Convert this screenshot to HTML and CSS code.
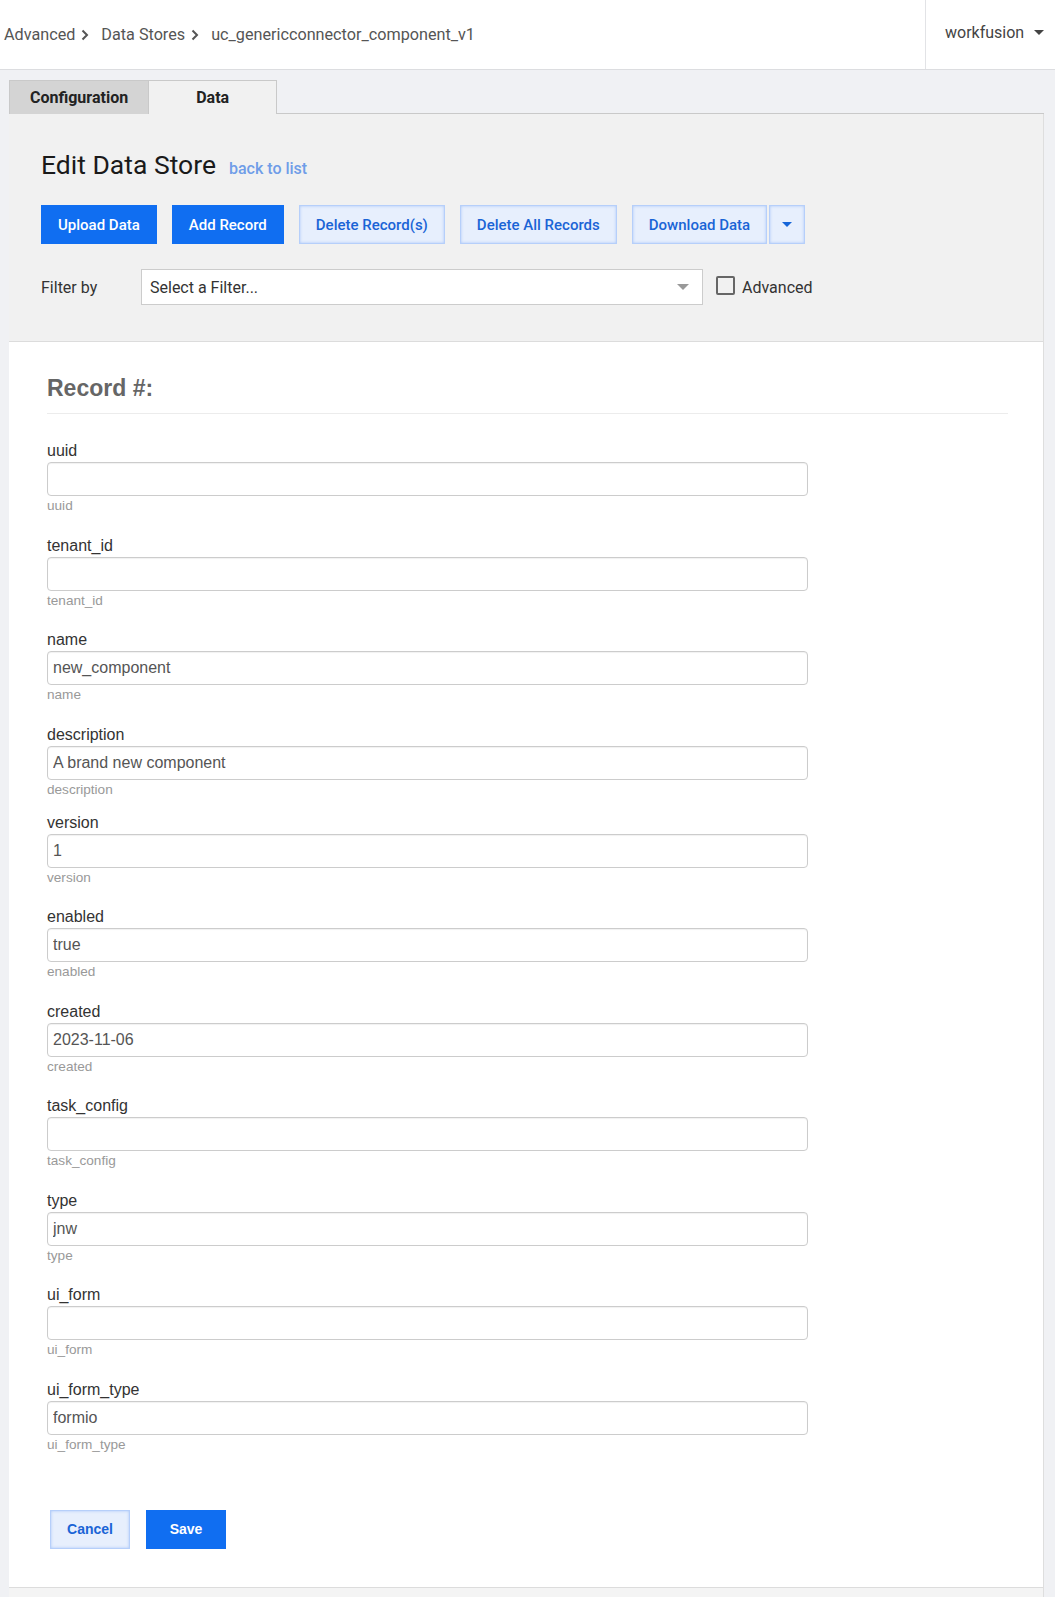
FILE: index.html
```html
<!DOCTYPE html>
<html lang="en">
<head>
    <meta charset="UTF-8">
    <title>Edit Data Store</title>
    <link rel="stylesheet" href="styles.css">
</head>
<body>
    <header class="topbar">
        <nav class="crumbs">
            <a href="#">Advanced</a>
            <svg class="chev" width="8" height="12" viewBox="0 0 8 12"><path d="M1.5 1.5 6 6l-4.5 4.5" fill="none" stroke="#555" stroke-width="2"/></svg>
            <a href="#">Data Stores</a>
            <svg class="chev" width="8" height="12" viewBox="0 0 8 12"><path d="M1.5 1.5 6 6l-4.5 4.5" fill="none" stroke="#555" stroke-width="2"/></svg>
            <span>uc_genericconnector_component_v1</span>
        </nav>
        <div class="user">workfusion <span class="caret"></span></div>
    </header>

    <main class="page">
        <div class="tabs">
            <a class="tab" href="#">Configuration</a>
            <a class="tab active" href="#">Data</a>
        </div>

        <section class="panel">
            <div class="panel-head">
                <div class="title-row">
                    <h1>Edit Data Store</h1>
                    <a class="back" href="#">back to list</a>
                </div>
                <div class="actions">
                    <button class="btn primary">Upload Data</button>
                    <button class="btn primary">Add Record</button>
                    <button class="btn light">Delete Record(s)</button>
                    <button class="btn light">Delete All Records</button>
                    <div class="split">
                        <button class="btn light">Download Data</button>
                        <button class="btn light toggle"><span class="caret blue"></span></button>
                    </div>
                </div>
                <div class="filter-row">
                    <span class="filter-label">Filter by</span>
                    <div class="select">Select a Filter... <span class="caret grey"></span></div>
                    <label class="check"><span class="box"></span>Advanced</label>
                </div>
            </div>

            <div class="record">
                <h2>Record #:</h2>
                <form class="fields">
                    <div class="group">
                        <label>uuid</label>
                        <input type="text" value="">
                        <div class="help">uuid</div>
                    </div>
                    <div class="group">
                        <label>tenant_id</label>
                        <input type="text" value="">
                        <div class="help">tenant_id</div>
                    </div>
                    <div class="group">
                        <label>name</label>
                        <input type="text" value="new_component">
                        <div class="help">name</div>
                    </div>
                    <div class="group tight">
                        <label>description</label>
                        <input type="text" value="A brand new component">
                        <div class="help">description</div>
                    </div>
                    <div class="group">
                        <label>version</label>
                        <input type="text" value="1">
                        <div class="help">version</div>
                    </div>
                    <div class="group">
                        <label>enabled</label>
                        <input type="text" value="true">
                        <div class="help">enabled</div>
                    </div>
                    <div class="group">
                        <label>created</label>
                        <input type="text" value="2023-11-06">
                        <div class="help">created</div>
                    </div>
                    <div class="group">
                        <label>task_config</label>
                        <input type="text" value="">
                        <div class="help">task_config</div>
                    </div>
                    <div class="group">
                        <label>type</label>
                        <input type="text" value="jnw">
                        <div class="help">type</div>
                    </div>
                    <div class="group">
                        <label>ui_form</label>
                        <input type="text" value="">
                        <div class="help">ui_form</div>
                    </div>
                    <div class="group">
                        <label>ui_form_type</label>
                        <input type="text" value="formio">
                        <div class="help">ui_form_type</div>
                    </div>
                </form>
                <div class="form-actions">
                    <button class="btn light small">Cancel</button>
                    <button class="btn primary small">Save</button>
                </div>
            </div>
            <div class="panel-foot"></div>
        </section>
    </main>
</body>
</html>
```

FILE: styles.css
```css
body {
    margin: 0;
    background: #eceef2;
    font-family: Roboto, "Liberation Sans", sans-serif;
    color: #333;
}

/* top bar */
.topbar {
    display: flex;
    justify-content: space-between;
    height: 69px;
    background: #fff;
    border-bottom: 1px solid #dcdde0;
}
.crumbs {
    display: flex;
    align-items: center;
    padding-left: 4px;
    font-size: 16.2px;
    color: #555;
}
.crumbs a {
    color: #555;
    text-decoration: none;
}
.chev {
    margin: 1px 12px 0 6px;
}
.user {
    display: flex;
    align-items: center;
    gap: 10px;
    width: 130px;
    padding: 0 0 4px 19px;
    box-sizing: border-box;
    border-left: 1px solid #e2e3e6;
    font-size: 16px;
    color: #444;
}
.caret {
    display: inline-block;
    width: 0;
    height: 0;
    border-left: 5px solid transparent;
    border-right: 5px solid transparent;
    border-top: 5px solid #444;
}
.caret.blue { border-top-color: #1565d8; }
.caret.grey {
    border-left-width: 6px;
    border-right-width: 6px;
    border-top: 6px solid #999;
}

/* tabs + panel */
.page {
    padding: 10px 11px 0 9px;
    background: #f0f1f4;
}
.tabs {
    display: flex;
    border-bottom: 1px solid #c9c9c9;
}
.tab {
    min-width: 128px;
    height: 34px;
    margin-bottom: -1px;
    padding: 0 20px;
    box-sizing: border-box;
    display: flex;
    align-items: center;
    justify-content: center;
    font-size: 16px;
    font-weight: 700;
    color: #222;
    text-decoration: none;
    background: #d4d4d4;
    border: 1px solid #c9c9c9;
    border-bottom: none;
}
.tab.active {
    background: #f1f1f1;
    border-left: none;
}
.panel {
    border-right: 1px solid #dedede;
}
.panel-head {
    background: #f1f1f1;
    padding: 34px 32px 36px;
    border-bottom: 1px solid #dcdcdc;
}
.title-row {
    display: flex;
    align-items: baseline;
    gap: 13px;
}
h1 {
    margin: 0;
    font-size: 26.5px;
    line-height: 34px;
    font-weight: 400;
    color: #1a1a1a;
}
.back {
    font-size: 16px;
    font-weight: 500;
    color: #6f9de8;
    text-decoration: none;
}
.actions {
    display: flex;
    gap: 15px;
    margin-top: 23px;
}
.split {
    display: flex;
    gap: 2px;
}
.btn {
    height: 39px;
    padding: 0 16px;
    font-family: Roboto, "Liberation Sans", sans-serif;
    font-size: 15px;
    font-weight: 500;
    border: 1px solid transparent;
    cursor: pointer;
}
.btn.primary {
    background: #106ef1;
    border-color: #106ef1;
    color: #fff;
}
.btn.light {
    background: #e7effd;
    border-color: #b6cffa;
    box-shadow: inset 0 0 3px #a9c6f8;
    color: #1a64d6;
}
.btn.toggle {
    width: 36px;
    padding: 0;
    display: flex;
    align-items: center;
    justify-content: center;
}
.filter-row {
    display: flex;
    align-items: center;
    margin-top: 25px;
    font-size: 16px;
}
.filter-label {
    width: 100px;
}
.select {
    width: 562px;
    height: 36px;
    box-sizing: border-box;
    display: flex;
    align-items: center;
    justify-content: space-between;
    padding: 0 13px 0 8px;
    background: #fff;
    border: 1px solid #ccc;
    color: #333;
}
.check {
    display: flex;
    align-items: center;
    gap: 7px;
    margin-left: 13px;
    color: #333;
}
.box {
    width: 19px;
    height: 19px;
    box-sizing: border-box;
    border: 2px solid #666;
    border-radius: 2px;
    margin-top: -4px;
}

/* record form */
.record {
    background: #fff;
    padding: 33px 35px 38px 38px;
    font-family: "Liberation Sans", Arial, sans-serif;
}
h2 {
    margin: 0;
    padding-bottom: 12px;
    border-bottom: 1px solid #ececec;
    font-size: 23px;
    line-height: 26px;
    color: #666;
}
.fields {
    margin-top: 27px;
}
.group {
    margin-bottom: 19.5px;
}
.group.tight {
    margin-bottom: 13px;
}
.group label {
    display: block;
    font-size: 16px;
    line-height: 20px;
    margin-bottom: 1px;
    color: #333;
}
.group input {
    display: block;
    width: 761px;
    height: 34px;
    box-sizing: border-box;
    padding: 0 5px;
    font-family: "Liberation Sans", Arial, sans-serif;
    font-size: 16px;
    color: #555;
    border: 1px solid #ccc;
    border-radius: 4px;
    box-shadow: inset 0 1px 1px rgba(0, 0, 0, 0.06);
}
.help {
    font-size: 13.6px;
    line-height: 20px;
    color: #999;
}
/* margin collapses with the last group's bottom margin */
.form-actions {
    display: flex;
    gap: 16px;
    margin: 55px 0 0 3px;
}
.btn.small {
    min-width: 80px;
    font-family: "Liberation Sans", Arial, sans-serif;
    font-size: 14px;
    font-weight: 700;
}
.panel-foot {
    height: 12px;
    background: #f4f4f4;
    border-top: 1px solid #dcdcdc;
}
```
